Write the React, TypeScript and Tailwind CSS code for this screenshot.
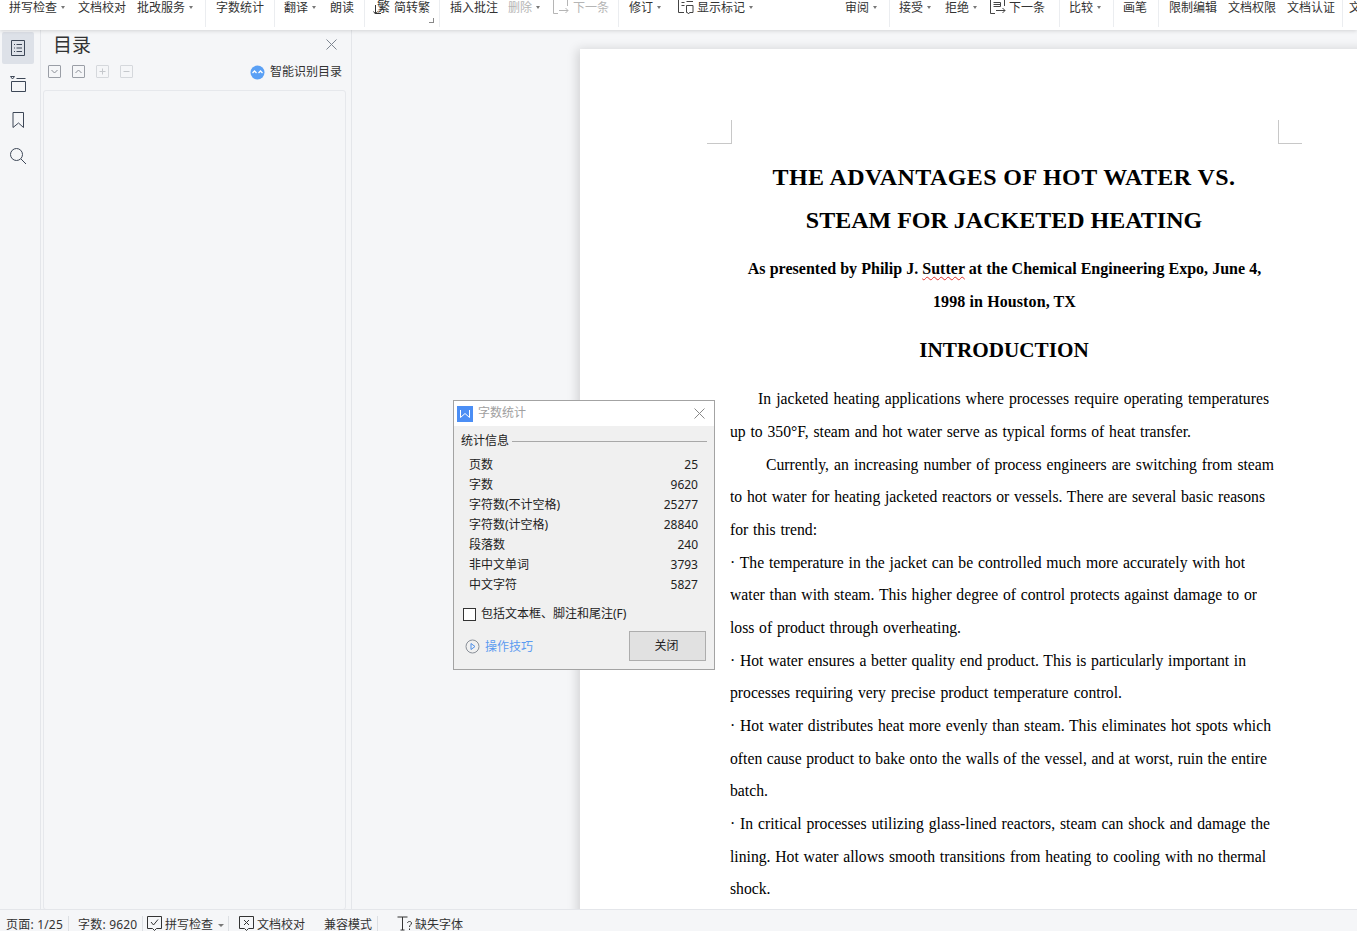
import type { ReactNode } from "react";

const cjk = "font-['Noto_Sans','Noto_Sans_CJK_SC',sans-serif]";

const stats = [
  ["页数", "25"],
  ["字数", "9620"],
  ["字符数(不计空格)", "25277"],
  ["字符数(计空格)", "28840"],
  ["段落数", "240"],
  ["非中文单词", "3793"],
  ["中文字符", "5827"],
];

// [text, indent, right edge of the line]
const body: [string, number, number][] = [
  ["In jacketed heating applications where processes require operating temperatures", 28, 1269],
  ["up to 350°F, steam and hot water serve as typical forms of heat transfer.", 0, 1191],
  ["Currently, an increasing number of process engineers are switching from steam", 36, 1274],
  ["to hot water for heating jacketed reactors or vessels. There are several basic reasons", 0, 1265],
  ["for this trend:", 0, 817],
  ["· The temperature in the jacket can be controlled much more accurately with hot", 0, 1245],
  ["water than with steam. This higher degree of control protects against damage to or", 0, 1257],
  ["loss of product through overheating.", 0, 961],
  ["· Hot water ensures a better quality end product. This is particularly important in", 0, 1246],
  ["processes requiring very precise product temperature control.", 0, 1122],
  ["· Hot water distributes heat more evenly than steam. This eliminates hot spots which", 0, 1271],
  ["often cause product to bake onto the walls of the vessel, and at worst, ruin the entire", 0, 1267],
  ["batch.", 0, 768],
  ["· In critical processes utilizing glass-lined reactors, steam can shock and damage the", 0, 1270],
  ["lining. Hot water allows smooth transitions from heating to cooling with no thermal", 0, 1266],
  ["shock.", 0, 770],
];

function Caret() {
  return <span className="ml-[4px] mt-[6px] h-0 w-0 border-x-[2.5px] border-t-[3px] border-x-transparent border-t-[#777]" />;
}

function Tool({ label, caret, gray, icon, className = "" }: { label: string; caret?: boolean; gray?: boolean; icon?: ReactNode; className?: string }) {
  return (
    <div className={`flex shrink-0 items-start ${gray ? "text-[#b5b5b5]" : "text-[#333]"} ${className}`}>
      {icon}
      <span className="leading-[16px]">{label}</span>
      {caret && <Caret />}
    </div>
  );
}

function Group({ w, children }: { w: string; children: ReactNode }) {
  return <div className={`flex h-[27px] shrink-0 items-start border-r border-[#ebedf0] ${w}`}>{children}</div>;
}

function NextIcon({ color, lines }: { color: string; lines?: boolean }) {
  return (
    <svg width="16" height="15" viewBox="0 0 16 15" fill="none" stroke={color} strokeWidth="1" className="mr-[3px] shrink-0">
      <path d="M.500 0v13.500H5M14.500 0v6M6 10.500h9M12.500 8l2.500 2.500-2.500 2.500" />
      {lines && <path d="M3.500 2.500h7v4h-7M3.500 4.500h7" />}
    </svg>
  );
}

function MarkIcon() {
  return (
    <svg width="16" height="15" viewBox="0 0 16 15" fill="none" stroke="#444" strokeWidth="1" className="mr-[3px] shrink-0">
      <path d="M.500 0v12.500H6M3.500 2.500h3M3.500 5.500h3M8.500 5.500h6.500v7h-3.500l-1 1.500-1-1.500h-1zM8.500 1.500h6.500" />
    </svg>
  );
}

function Toolbar() {
  return (
    <div className={`relative z-10 flex h-[30px] shrink-0 overflow-hidden bg-white text-[12px] shadow-[0_1px_4px_rgba(0,0,0,0.14)] ${cjk}`}>
      <Group w="w-[206px]">
        <Tool label="拼写检查" caret className="ml-[9px]" />
        <Tool label="文档校对" className="ml-[13px]" />
        <Tool label="批改服务" caret className="ml-[11px]" />
      </Group>
      <Group w="w-[69px]">
        <Tool label="字数统计" className="ml-[10px]" />
      </Group>
      <Group w="w-[90px]">
        <Tool label="翻译" caret className="ml-[9px]" />
        <Tool label="朗读" className="ml-[14px]" />
      </Group>
      <Group w="w-[75px] relative">
        <Tool
          label="简转繁"
          className="ml-[9px]"
          icon={
            <span className="relative mr-[4px] h-[16px] w-[16px] pl-[3px] text-[13px] leading-[13px] text-[#333]">
              繁
              <svg width="9" height="10" viewBox="0 0 9 10" fill="none" stroke="#333" className="absolute -left-[1px] top-[5px]">
                <path d="M2.500 0v8.500H8M2.500 9L.500 6.500M2.500 9l2-2.500" />
              </svg>
            </span>
          }
        />
        <span className="absolute bottom-[4px] right-[5px] h-[5px] w-[5px] border-b border-r border-[#888]" />
      </Group>
      <Group w="w-[179px]">
        <Tool label="插入批注" className="ml-[10px]" />
        <Tool label="删除" gray caret className="ml-[10px]" />
        <Tool label="下一条" gray className="ml-[13px] [&>svg]:mr-[4px]" icon={<NextIcon color="#b5b5b5" />} />
      </Group>
      <Group w="w-[271px]">
        <Tool label="修订" caret className="ml-[10px]" />
        <Tool label="显示标记" caret className="ml-[17px]" icon={<MarkIcon />} />
        <Tool label="审阅" caret className="ml-[92px]" />
      </Group>
      <Group w="w-[170px]">
        <Tool label="接受" caret className="ml-[9px]" />
        <Tool label="拒绝" caret className="ml-[14px]" />
        <Tool label="下一条" className="ml-[13px]" icon={<NextIcon color="#444" lines />} />
      </Group>
      <Group w="w-[54px]">
        <Tool label="比较" caret className="ml-[9px]" />
      </Group>
      <Group w="w-[45px]">
        <Tool label="画笔" className="ml-[9px]" />
      </Group>
      <Group w="w-[184px]">
        <Tool label="限制编辑" className="ml-[10px]" />
        <Tool label="文档权限" className="ml-[11px]" />
        <Tool label="文档认证" className="ml-[11px]" />
      </Group>
      <Tool label="文" className="ml-[6px]" />
    </div>
  );
}

function Rail() {
  return (
    <div className="flex w-[41px] shrink-0 flex-col items-start border-r border-[#e4e6ea] pl-[2px] pt-[2px]">
      <div className="flex h-[32px] w-[32px] items-center justify-center rounded-[2px] bg-[#dde1e8]">
        <svg width="14" height="16" viewBox="0 0 14 16" fill="none" stroke="#3d4757">
          <path d="M.5.500h13v15H.5zM3 4.500h1M3 8h1M3 11.500h1M5.500 4.500H11M5.500 8H11M5.500 11.500H11" />
        </svg>
      </div>
      <div className="ml-[8px] mt-[12px] h-[16px]">
        <svg width="16" height="16" viewBox="0 0 16 16" fill="none" stroke="#3d4757">
          <path d="M.500.500h4L2.500 3zM6.500 2.500h9M1.500 5.500v10h14v-10h-14" />
        </svg>
      </div>
      <div className="ml-[9px] mt-[20px] h-[17px]">
        <svg width="14" height="17" viewBox="0 0 14 17" fill="none" stroke="#3d4757">
          <path d="M2 .500h10.500V15.500L7.500 11 2 15.500z" />
        </svg>
      </div>
      <div className="ml-[7px] mt-[18px] h-[18px]">
        <svg width="18" height="18" viewBox="0 0 18 18" fill="none" stroke="#3d4757">
          <circle cx="7.500" cy="7.500" r="6" />
          <path d="M12 12l5 5" />
        </svg>
      </div>
    </div>
  );
}

function MiniButton({ light, children }: { light?: boolean; children: ReactNode }) {
  return (
    <span className={`flex h-[13px] w-[13px] items-center justify-center rounded-[1px] border ${light ? "border-[#d5d8dc]" : "border-[#9a9ea6]"}`}>
      <svg width="7" height="7" viewBox="0 0 7 7" fill="none" stroke={light ? "#c5c8cc" : "#8a8e96"}>
        {children}
      </svg>
    </span>
  );
}

function TocPanel() {
  return (
    <div className={`flex w-[311px] shrink-0 flex-col border-r border-[#e4e6ea] ${cjk}`}>
      <div className="flex h-[30px] items-center justify-between pl-[12px] pr-[14px]">
        <span className="-mt-[1px] text-[19px] leading-[26px] text-[#333]">目录</span>
        <svg width="11" height="11" viewBox="0 0 11 11" fill="none" stroke="#7d8590" className="-mt-[1px]">
          <path d="M.500.500l10 10M10.500.500l-10 10" />
        </svg>
      </div>
      <div className="mt-[5px] flex h-[13px] items-center gap-[11px] pl-[7px]">
        <MiniButton>
          <path d="M.500 2l3 3 3-3" />
        </MiniButton>
        <MiniButton>
          <path d="M.500 5l3-3 3 3" />
        </MiniButton>
        <MiniButton light>
          <path d="M.500 3.500h6M3.500.500v6" />
        </MiniButton>
        <MiniButton light>
          <path d="M.500 3.500h6" />
        </MiniButton>
        <div className="ml-auto mr-[9px] flex items-center pt-[1px] text-[12px] text-[#333]">
          <svg width="15" height="15" viewBox="0 0 15 15" className="mr-[5px]">
            <circle cx="7.500" cy="7.500" r="7" fill="#5aa0f5" />
            <path d="M2.500 8l2-2 2 2M8.500 8l2-2 2 2" fill="none" stroke="#fff" strokeWidth="1.300" />
          </svg>
          智能识别目录
        </div>
      </div>
      <div className="mb-[-1px] ml-[2px] mr-[5px] mt-[12px] flex-1 rounded-[3px] border border-[#e6e8ec]" />
    </div>
  );
}

function Page() {
  return (
    <div className="ml-[228px] mt-[19px] w-[848px] shrink-0 bg-white pb-[40px] pt-[71px] text-black shadow-[-3px_0_10px_rgba(0,0,0,0.14)] font-['Liberation_Serif',serif]">
      <div className="flex pl-[127px]">
        <div className="h-[24px] w-[25px] border-b border-r border-[#c8c8c8]" />
        <div className="ml-[546px] h-[24px] w-[24px] border-b border-l border-[#c8c8c8]" />
      </div>
      <div className="ml-[150px] w-[548px]">
        <div className="mt-[12px] text-center text-[24px] font-bold leading-[43px]">
          <div className="tracking-[0.42px]">THE ADVANTAGES OF HOT WATER VS.</div>
          <div>STEAM FOR JACKETED HEATING</div>
        </div>
        <div className="mt-[11px] pl-[1px] text-center text-[16px] font-bold leading-[32.67px] tracking-[0.02px]">
          <div>
            As presented by Philip J.{" "}
            <span className="underline decoration-[#e0312b] decoration-wavy decoration-1 underline-offset-2">Sutter</span> at the Chemical Engineering Expo, June 4,
          </div>
          <div className="tracking-[0.1px]">1998 in Houston, TX</div>
        </div>
        <div className="mt-[16px] text-center text-[21.2px] font-bold leading-[33px]">INTRODUCTION</div>
        <div className="mt-[16px] text-[15.7px] leading-[32.67px]">
          {body.map(([text, indent, right]) => (
            <div
              key={text}
              className="h-[32.67px] overflow-hidden [text-align-last:justify]"
              style={{ marginLeft: indent, width: right - 730 - indent }}
            >
              {text}
            </div>
          ))}
        </div>
      </div>
    </div>
  );
}

function WordCountDialog() {
  return (
    <div className={`absolute left-[453px] top-[400px] flex h-[270px] w-[262px] flex-col border border-[#a3a3a3] bg-[#f0f0f0] text-[12px] text-[#222] ${cjk}`}>
      <div className="flex h-[25px] shrink-0 items-center bg-white pl-[3px] pr-[9px]">
        <svg width="16" height="16" viewBox="0 0 16 16" className="mr-[5px]">
          <rect width="16" height="16" fill="#4b8ef5" />
          <path d="M3.500 4v7.500l4.500-4 4.500 4V4" fill="none" stroke="#fff" />
        </svg>
        <span className="-mt-[1px] text-[#a0a0a0]">字数统计</span>
        <svg width="11" height="11" viewBox="0 0 11 11" fill="none" stroke="#888" className="ml-auto">
          <path d="M.500.500l10 10M10.500.500l-10 10" />
        </svg>
      </div>
      <div className="mt-[6px] flex h-[18px] items-center pl-[7px] pr-[7px]">
        <span>统计信息</span>
        <span className="ml-[3px] h-px flex-1 bg-[#a8a8a8]" />
      </div>
      <div className="mt-[5px] pl-[15px] pr-[16px]">
        {stats.map(([name, value]) => (
          <div key={name} className="flex h-[20px] items-center justify-between">
            <span>{name}</span>
            <span>{value}</span>
          </div>
        ))}
      </div>
      <label className="ml-[9px] mt-[10px] flex h-[18px] items-center">
        <span className="mr-[5px] h-[13px] w-[13px] border border-[#333] bg-white" />
        包括文本框、脚注和尾注(F)
      </label>
      <div className="ml-[11px] mr-[8px] mt-[8px] flex items-center">
        <svg width="15" height="15" viewBox="0 0 15 15" fill="none" className="mr-[5px] mt-[1px]">
          <circle cx="7.500" cy="7.500" r="6.500" stroke="#8a9099" />
          <path d="M6 4.500l4 3-4 3z" stroke="#4f8fe8" />
        </svg>
        <span className="mt-[1px] text-[#5b9bf0]">操作技巧</span>
        <button className="ml-auto h-[30px] w-[77px] border border-[#adadad] bg-[#e1e1e1] pr-[2px] text-[12px] text-[#222]">关闭</button>
      </div>
    </div>
  );
}

function StatusBar() {
  return (
    <div className={`relative z-10 flex h-[22px] shrink-0 items-start border-t border-[#e4e6ea] bg-[#f5f6f8] pt-[6px] text-[12px] leading-[16px] text-[#333] ${cjk}`}>
      <span className="ml-[6px] w-[62px] pt-[1px] tracking-[0.2px]">页面: 1/25</span>
      <span className="h-[15px] w-px bg-[#dcdfe3]" />
      <span className="ml-[9px] w-[64px] pt-[1px] tracking-[0.2px]">字数: 9620</span>
      <span className="h-[15px] w-px bg-[#dcdfe3]" />
      <svg width="15" height="15" viewBox="0 0 15 15" fill="none" stroke="#333" className="ml-[4px] mr-[3px] shrink-0">
        <path d="M.500.500h14v12h-5L7.500 14.500 5.500 12.500h-5zM4 6l2.500 3L11 3.500" />
      </svg>
      <span className="pt-[1px]">拼写检查</span>
      <span className="ml-[5px] mt-[8px] h-0 w-0 border-x-[3px] border-t-[3px] border-x-transparent border-t-[#777]" />
      <span className="ml-[4px] h-[15px] w-px bg-[#dcdfe3]" />
      <svg width="15" height="15" viewBox="0 0 15 15" fill="none" stroke="#333" className="ml-[10px] mr-[3px] shrink-0">
        <path d="M.500.500h14v12h-5L7.500 14.500 5.500 12.500h-5zM5 4l5 5M10 4l-5 5" />
      </svg>
      <span className="pt-[1px]">文档校对</span>
      <span className="ml-[19px] pt-[1px]">兼容模式</span>
      <span className="ml-[5px] h-[15px] w-px bg-[#dcdfe3]" />
      <svg width="16" height="15" viewBox="0 0 16 15" fill="none" stroke="#333" className="ml-[19px] mr-[2px] shrink-0">
        <path d="M.500 1h10M5.500 1v13M3.500 14h4M10.500 7c0-2 4-2 4 0s-2 1.800-2 4M12.500 12.500v1.500" />
      </svg>
      <span className="pt-[1px]">缺失字体</span>
    </div>
  );
}

export default function App() {
  return (
    <div className="relative flex h-[931px] w-[1357px] flex-col overflow-hidden bg-[#f5f6f8]">
      <Toolbar />
      <div className="flex min-h-0 flex-1">
        <Rail />
        <TocPanel />
        <div className="flex min-w-0 flex-1 items-start overflow-hidden">
          <Page />
        </div>
      </div>
      <StatusBar />
      <WordCountDialog />
    </div>
  );
}
